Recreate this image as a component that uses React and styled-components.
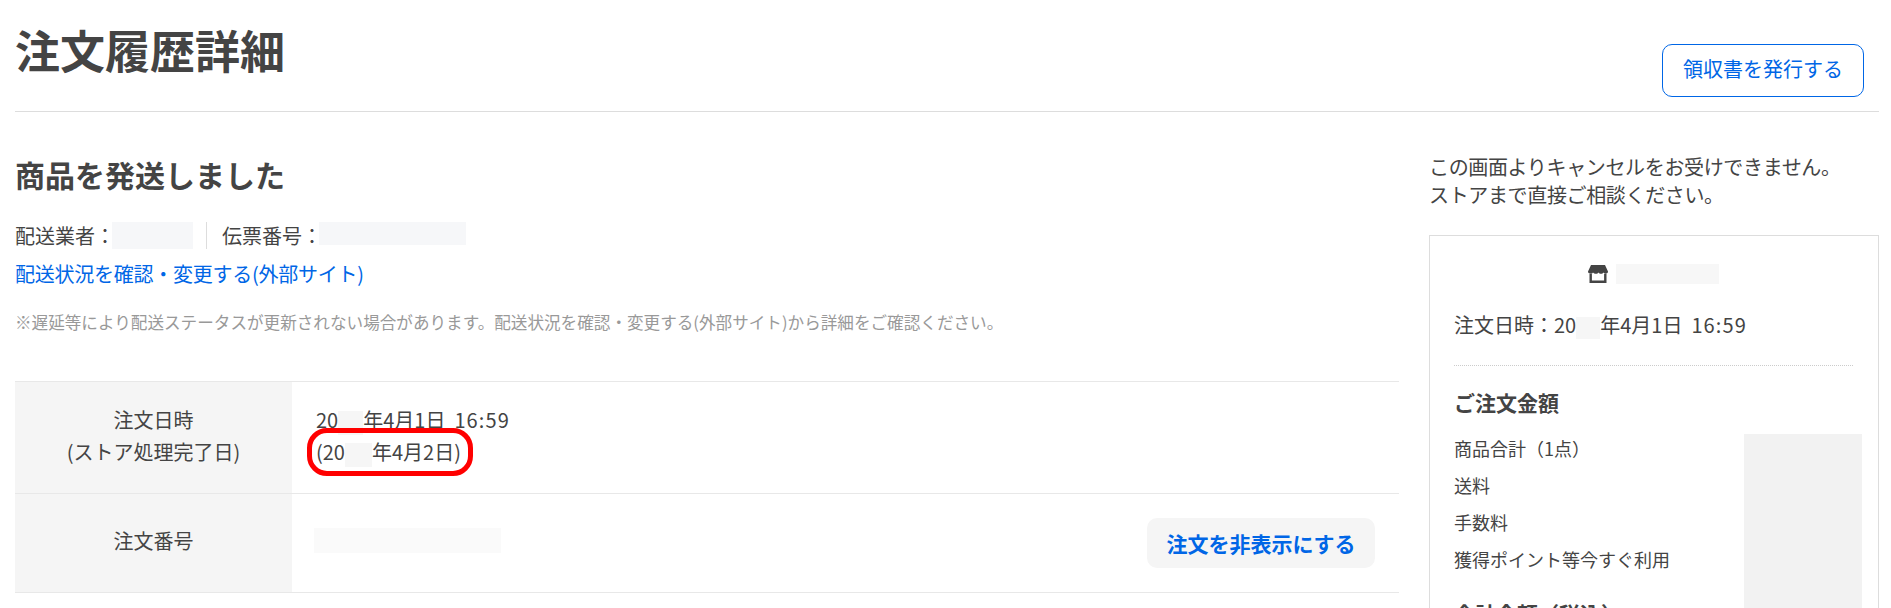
import React from 'react'
import styled, { createGlobalStyle } from 'styled-components'

const GlobalStyle = createGlobalStyle`
  html, body {
    margin: 0;
    height: 608px;
    overflow: hidden;
    background: #fff;
  }

  body {
    font-family: 'Noto Sans CJK JP', 'Noto Sans', sans-serif;
    font-size: 20px;
    color: #444;
  }
`

const StoreIcon = () => (
  <svg width='20' height='18' viewBox='0 0 20 18' aria-hidden='true'>
    <path
      fill='#444'
      d='M3 0h14l3 6.500c0 1.300-.9 2.200-2.200 2.200-1 0-1.800-.5-2.300-1.300-.5.8-1.400 1.300-2.500 1.300s-2-.5-2.500-1.300c-.5.8-1.400 1.300-2.500 1.300S5.500 8.200 5 7.400C4.500 8.200 3.700 8.700 2.700 8.700 1 8.700 0 7.800 0 6.500z'
    />
    <path fill='none' stroke='#444' strokeWidth='2.400' d='M2.700 9v7.800h14.600V9' />
  </svg>
)

const App = () => (
  <Page>
    <GlobalStyle />
    <Header>
      <Title>注文履歴詳細</Title>
      <ReceiptButton>領収書を発行する</ReceiptButton>
    </Header>
    <Columns>
      <Main>
        <Status>商品を発送しました</Status>
        <Shipping>
          <span>配送業者：</span>
          <Redacted $w={81} $h={27} $tone='#f6f7f9' $overlap />
          <Divider />
          <span>伝票番号：</span>
          <Redacted $w={147} $h={23} $tone='#f6f7f9' $overlap $top />
        </Shipping>
        <TrackLink href='#'>配送状況を確認・変更する(外部サイト)</TrackLink>
        <Note>
          ※遅延等により配送ステータスが更新されない場合があります。配送状況を確認・変更する(外部サイト)から詳細をご確認ください。
        </Note>
        <InfoTable>
          <InfoRow>
            <InfoLabel>
              注文日時
              <br />
              (ストア処理完了日)
            </InfoLabel>
            <InfoValue>
              <div>
                20
                <Redacted $w={25} $h={24} $tone='#f6f6f6' />
                年4月1日<Time>16:59</Time>
              </div>
              <Circled>
                (20
                <Redacted $w={27} $h={24} $tone='#f6f6f6' />
                年4月2日)
              </Circled>
            </InfoValue>
          </InfoRow>
          <InfoRow>
            <InfoLabel>注文番号</InfoLabel>
            <InfoValue $split>
              <OrderNumber $w={187} $h={25} $tone='#fafafa' />
              <HideButton>注文を非表示にする</HideButton>
            </InfoValue>
          </InfoRow>
        </InfoTable>
      </Main>
      <Side>
        <Notice>
          この画面よりキャンセルをお受けできません。
          <br />
          ストアまで直接ご相談ください。
        </Notice>
        <Card>
          <StoreRow>
            <StoreIcon />
            <Redacted $w={103} $h={20} $tone='#f7f7f7' />
          </StoreRow>
          <OrderDate>
            注文日時：20
            <Redacted $w={24} $h={22} $tone='#f6f6f6' />
            年4月1日<Time>16:59</Time>
          </OrderDate>
          <Amounts>
            <SectionTitle>ご注文金額</SectionTitle>
            <AmountGrid>
              <AmountList>
                <AmountRow>商品合計（1点）</AmountRow>
                <AmountRow>送料</AmountRow>
                <AmountRow>手数料</AmountRow>
                <AmountRow>獲得ポイント等今すぐ利用</AmountRow>
                <TotalTitle>合計金額（税込）</TotalTitle>
              </AmountList>
              <PriceBlock />
            </AmountGrid>
          </Amounts>
        </Card>
      </Side>
    </Columns>
  </Page>
)

const Page = styled.div`
  padding: 0 12px 0 15px;
  height: 608px;
  overflow: hidden;
`

const Header = styled.header`
  display: flex;
  justify-content: space-between;
  align-items: flex-end;
  height: 112px;
  box-sizing: border-box;
  padding: 0 15px 14px 0;
  border-bottom: 1px solid #ddd;
`

const Title = styled.h1`
  align-self: flex-start;
  margin: 20px 0 0;
  font-size: 45px;
  line-height: 60px;
  font-weight: 700;
`

const ReceiptButton = styled.button`
  width: 202px;
  height: 53px;
  padding: 0 0 4px;
  background: #fff;
  border: 1.5px solid #0066e6;
  border-radius: 10px;
  color: #0066e6;
  font: inherit;
`

const Columns = styled.div`
  display: grid;
  grid-template-columns: 1384px 450px;
  gap: 30px;
`

const Main = styled.main`
  min-width: 0;
`

const Status = styled.h2`
  margin: 42px 0 28px;
  font-size: 30px;
  line-height: 40px;
  font-weight: 700;
`

const Shipping = styled.div`
  display: flex;
  align-items: center;
  height: 27px;
  line-height: 27px;
`

const Redacted = styled.span`
  display: inline-block;
  width: ${(p) => p.$w}px;
  height: ${(p) => p.$h}px;
  background: ${(p) => p.$tone};
  vertical-align: middle;
  margin-left: ${(p) => (p.$overlap ? '-3px' : '0')};
  align-self: ${(p) => (p.$top ? 'flex-start' : 'auto')};
`

const OrderNumber = styled(Redacted)`
  margin: 0 0 6px -2px;
`

const Divider = styled.span`
  width: 1px;
  height: 27px;
  margin: 0 15px 0 13px;
  background: #ddd;
`

const TrackLink = styled.a`
  display: block;
  margin-top: 11px;
  color: #0066e6;
  line-height: 28px;
  letter-spacing: -0.25px;
  text-decoration: none;
`

const Note = styled.p`
  margin: 22px 0 47px;
  font-size: 16.6px;
  line-height: 24px;
  color: #999;
`

const InfoTable = styled.div`
  border-bottom: 1px solid #e8e8e8;
`

const InfoRow = styled.div`
  display: grid;
  grid-template-columns: 277px 1fr;
  border-top: 1px solid #e8e8e8;
`

const InfoLabel = styled.div`
  box-sizing: border-box;
  padding-bottom: 4px;
  background: #f5f5f5;
  text-align: center;
  line-height: 32px;
  align-content: center;
`

const InfoValue = styled.div`
  display: ${(p) => (p.$split ? 'flex' : 'block')};
  justify-content: space-between;
  align-items: center;
  padding: ${(p) => (p.$split ? '24px' : '22px 24px 25px')};
  line-height: 32px;
`

const Time = styled.span`
  margin-left: 9px;
  letter-spacing: 1.1px;
`

const Circled = styled.span`
  position: relative;
  display: inline-block;

  &::after {
    content: '';
    position: absolute;
    top: -8px;
    right: -12px;
    bottom: -8px;
    left: -9px;
    border: 5px solid #f00;
    border-radius: 20px;
  }
`

const HideButton = styled.button`
  width: 228px;
  height: 50px;
  padding: 0;
  background: #f5f5f5;
  border: 0;
  border-radius: 10px;
  color: #0066e6;
  font: inherit;
  font-size: 21px;
  font-weight: 700;
`

const Side = styled.aside`
  min-width: 0;
`

const Notice = styled.p`
  margin: 41px 0 26px;
  line-height: 28px;
  letter-spacing: -0.35px;
`

const Card = styled.section`
  padding: 28px 25px 0 24px;
  border: 1px solid #ddd;
  height: 600px;
`

const StoreRow = styled.div`
  display: flex;
  justify-content: center;
  align-items: center;
  gap: 8px;
`

const OrderDate = styled.div`
  margin: 27px 0 26px;
  line-height: 28px;
`

const Amounts = styled.div`
  border-top: 1px dotted #ccc;
  padding-top: 21px;
`

const SectionTitle = styled.h3`
  margin: 0 0 13px;
  font-size: 21px;
  line-height: 30px;
  font-weight: 700;
`

const AmountGrid = styled.div`
  display: grid;
  grid-template-columns: 1fr 118px;
  margin-right: -9px;
`

const AmountList = styled.div`
  display: flex;
  flex-direction: column;
`

const AmountRow = styled.div`
  font-size: 18px;
  line-height: 37px;
`

const TotalTitle = styled(SectionTitle)`
  margin: 20px 0 0;
`

const PriceBlock = styled.div`
  margin-top: 4px;
  height: 200px;
  background: #f2f2f2;
`

export default App
